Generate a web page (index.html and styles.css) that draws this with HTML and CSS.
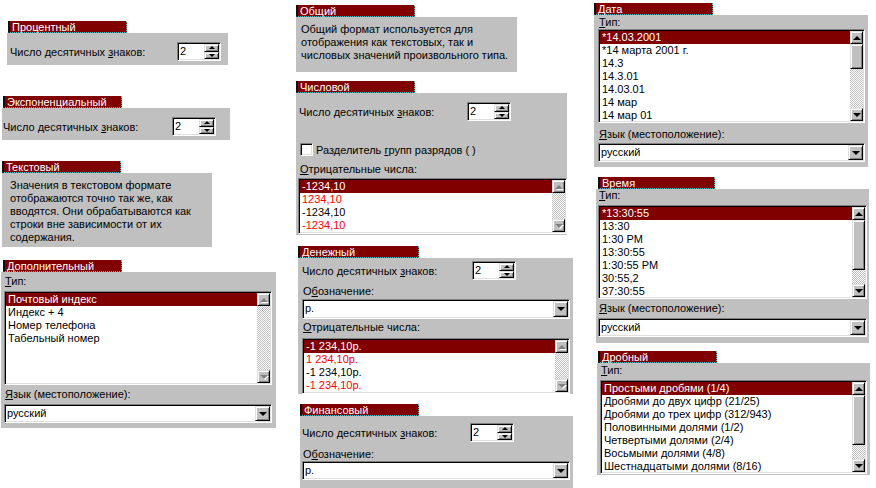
FILE: index.html
```html
<!DOCTYPE html>
<html lang="ru">

<head>
    <meta charset="UTF-8">
    <title>Форматы ячеек</title>
    <link rel="stylesheet" href="styles.css">
</head>

<body>
    <div class="sheet">
        <!-- левая колонка -->
        <div class="col col-1">
            <section class="panel percent">
                <div class="caption">Процентный</div>
                <div class="body">
                    <div class="spin-row">
                        <span>Число десятичных <u>з</u>наков:</span>
                        <div class="spin sunk"><span class="val">2</span>
                            <div class="spin-btns"><i class="btn"><b class="up"></b></i><i class="btn"><b class="down"></b></i></div>
                        </div>
                    </div>
                </div>
            </section>

            <section class="panel expo">
                <div class="caption">Экспоненциальный</div>
                <div class="body">
                    <div class="spin-row">
                        <span>Число десятичных <u>з</u>наков:</span>
                        <div class="spin sunk"><span class="val">2</span>
                            <div class="spin-btns"><i class="btn"><b class="up"></b></i><i class="btn"><b class="down"></b></i></div>
                        </div>
                    </div>
                </div>
            </section>

            <section class="panel text">
                <div class="caption">Текстовый</div>
                <div class="body">
                    <p class="note">Значения в текстовом формате<br>отображаются точно так же, как<br>вводятся. Они обрабатываются как<br>строки вне зависимости от их<br>содержания.</p>
                </div>
            </section>

            <section class="panel extra">
                <div class="caption">Дополнительный</div>
                <div class="body">
                    <div class="lbl"><u>Т</u>ип:</div>
                    <div class="list sunk tall">
                        <div class="items">
                            <div class="item sel">Почтовый индекс</div>
                            <div class="item">Индекс + 4</div>
                            <div class="item">Номер телефона</div>
                            <div class="item">Табельный номер</div>
                        </div>
                        <div class="sb off"><i class="btn"><b class="up"></b></i><span class="track"></span><i class="btn"><b class="down"></b></i></div>
                    </div>
                    <div class="lbl lang"><u>Я</u>зык (местоположение):</div>
                    <div class="combo sunk"><span class="val">русский</span><i class="btn"><b class="down"></b></i></div>
                </div>
            </section>
        </div>

        <!-- средняя колонка -->
        <div class="col col-2">
            <section class="panel general">
                <div class="caption">Общий</div>
                <div class="body">
                    <p class="note">Общий формат используется для<br>отображения как текстовых, так и<br>числовых значений произвольного типа.</p>
                </div>
            </section>

            <section class="panel number">
                <div class="caption">Числовой</div>
                <div class="body">
                    <div class="spin-row">
                        <span>Число десятичных <u>з</u>наков:</span>
                        <div class="spin sunk"><span class="val">2</span>
                            <div class="spin-btns"><i class="btn"><b class="up"></b></i><i class="btn"><b class="down"></b></i></div>
                        </div>
                    </div>
                    <div class="check-row"><span class="check sunk"></span><span>Разделитель <u>г</u>рупп разрядов ( )</span></div>
                    <div class="lbl neg-lbl"><u>О</u>трицательные числа:</div>
                    <div class="list sunk short">
                        <div class="items">
                            <div class="item sel">-1234,10</div>
                            <div class="item red">1234,10</div>
                            <div class="item">-1234,10</div>
                            <div class="item red">-1234,10</div>
                        </div>
                        <div class="sb off"><i class="btn"><b class="up"></b></i><span class="track"></span><i class="btn"><b class="down"></b></i></div>
                    </div>
                </div>
            </section>

            <section class="panel money">
                <div class="caption">Денежный</div>
                <div class="body">
                    <div class="spin-row">
                        <span>Число десятичных <u>з</u>наков:</span>
                        <div class="spin sunk"><span class="val">2</span>
                            <div class="spin-btns"><i class="btn"><b class="up"></b></i><i class="btn"><b class="down"></b></i></div>
                        </div>
                    </div>
                    <div class="lbl sym">О<u>б</u>означение:</div>
                    <div class="combo sunk"><span class="val">р.</span><i class="btn"><b class="down"></b></i></div>
                    <div class="lbl neg-lbl"><u>О</u>трицательные числа:</div>
                    <div class="list sunk short">
                        <div class="items">
                            <div class="item sel">-1 234,10р.</div>
                            <div class="item red">1 234,10р.</div>
                            <div class="item">-1 234,10р.</div>
                            <div class="item red">-1 234,10р.</div>
                        </div>
                        <div class="sb off"><i class="btn"><b class="up"></b></i><span class="track"></span><i class="btn"><b class="down"></b></i></div>
                    </div>
                </div>
            </section>

            <section class="panel fin">
                <div class="caption">Финансовый</div>
                <div class="body">
                    <div class="spin-row">
                        <span>Число десятичных <u>з</u>наков:</span>
                        <div class="spin sunk"><span class="val">2</span>
                            <div class="spin-btns"><i class="btn"><b class="up"></b></i><i class="btn"><b class="down"></b></i></div>
                        </div>
                    </div>
                    <div class="lbl sym">О<u>б</u>означение:</div>
                    <div class="combo sunk"><span class="val">р.</span><i class="btn"><b class="down"></b></i></div>
                </div>
            </section>
        </div>

        <!-- правая колонка -->
        <div class="col col-3">
            <section class="panel date">
                <div class="caption">Дата</div>
                <div class="body">
                    <div class="lbl"><u>Т</u>ип:</div>
                    <div class="list sunk tall">
                        <div class="items">
                            <div class="item sel">*14.03.2001</div>
                            <div class="item">*14 марта 2001 г.</div>
                            <div class="item">14.3</div>
                            <div class="item">14.3.01</div>
                            <div class="item">14.03.01</div>
                            <div class="item">14 мар</div>
                            <div class="item">14 мар 01</div>
                        </div>
                        <div class="sb"><i class="btn"><b class="up"></b></i><i class="thumb small"></i><span class="track"></span><i class="btn"><b class="down"></b></i></div>
                    </div>
                    <div class="lbl lang"><u>Я</u>зык (местоположение):</div>
                    <div class="combo sunk"><span class="val">русский</span><i class="btn"><b class="down"></b></i></div>
                </div>
            </section>

            <section class="panel time">
                <div class="caption">Время</div>
                <div class="body">
                    <div class="lbl"><u>Т</u>ип:</div>
                    <div class="list sunk tall">
                        <div class="items">
                            <div class="item sel">*13:30:55</div>
                            <div class="item">13:30</div>
                            <div class="item">1:30 PM</div>
                            <div class="item">13:30:55</div>
                            <div class="item">1:30:55 PM</div>
                            <div class="item">30:55,2</div>
                            <div class="item">37:30:55</div>
                        </div>
                        <div class="sb"><i class="btn"><b class="up"></b></i><i class="thumb big"></i><span class="track"></span><i class="btn"><b class="down"></b></i></div>
                    </div>
                    <div class="lbl lang"><u>Я</u>зык (местоположение):</div>
                    <div class="combo sunk"><span class="val">русский</span><i class="btn"><b class="down"></b></i></div>
                </div>
            </section>

            <section class="panel frac">
                <div class="caption">Дробный</div>
                <div class="body">
                    <div class="lbl"><u>Т</u>ип:</div>
                    <div class="list sunk tall">
                        <div class="items">
                            <div class="item sel">Простыми дробями (1/4)</div>
                            <div class="item">Дробями до двух цифр (21/25)</div>
                            <div class="item">Дробями до трех цифр (312/943)</div>
                            <div class="item">Половинными долями (1/2)</div>
                            <div class="item">Четвертыми долями (2/4)</div>
                            <div class="item">Восьмыми долями (4/8)</div>
                            <div class="item">Шестнадцатыми долями (8/16)</div>
                        </div>
                        <div class="sb"><i class="btn"><b class="up"></b></i><i class="thumb big"></i><span class="track"></span><i class="btn"><b class="down"></b></i></div>
                    </div>
                </div>
            </section>
        </div>
    </div>
</body>

</html>
```

FILE: styles.css
```css
body {
    margin: 0;
    background-color: white;
    color: black;
    font: 11px "Liberation Sans", Arial, sans-serif;
}

.sheet {
    display: flex;
    width: 876px;
    height: 488px;
    overflow: hidden;
}

.col {
    display: flex;
    flex-direction: column;
    align-items: flex-start;
}

.col-1 {
    width: 290px;
}

.col-2 {
    width: 295px;
}

.col-3 {
    width: 291px;
}

/* заголовок раздела */
.caption {
    box-sizing: border-box;
    width: 119px;
    height: 12px;
    padding-left: 2px;
    line-height: 12px;
    background-color: #800000;
    color: white;
    border-left: 2px solid #101010;
    border-right: 1px dotted #48b8c0;
    border-bottom: 1px dotted #48b8c0;
    white-space: nowrap;
}

.body {
    box-sizing: border-box;
    background-color: #c0c0c0;
    display: flex;
    flex-direction: column;
    align-items: flex-start;
}

.note {
    margin: 0;
    line-height: 13px;
}

.lbl {
    line-height: 13px;
    height: 13px;
    padding-left: 1px;
    white-space: nowrap;
}

/* рамки в стиле windows */
.sunk {
    box-sizing: border-box;
    padding: 1px;
    background-color: white;
    border: 1px solid;
    border-color: #808080 white white #808080;
    box-shadow: inset 1px 1px #000, inset -1px -1px #dfdfdf;
}

.btn {
    box-sizing: border-box;
    display: flex;
    align-items: center;
    justify-content: center;
    background-color: #c0c0c0;
    border: 1px solid;
    border-color: #dfdfdf #000 #000 #dfdfdf;
    box-shadow: inset 1px 1px white, inset -1px -1px #808080;
}

.up,
.down {
    width: 0;
    height: 0;
    border-left: 3px solid transparent;
    border-right: 3px solid transparent;
}

.up {
    border-bottom: 3px solid #000;
}

.down {
    border-top: 3px solid #000;
}

.sb .up,
.sb .down,
.combo .down {
    border-left-width: 4px;
    border-right-width: 4px;
}

.sb .up {
    border-bottom-width: 4px;
}

.sb .down,
.combo .down {
    border-top-width: 4px;
}

.off .up {
    border-bottom-color: #808080;
    filter: drop-shadow(1px 1px 0 white);
}

.off .down {
    border-top-color: #808080;
    filter: drop-shadow(1px 1px 0 white);
}

/* счётчик */
.spin-row {
    display: grid;
    align-items: center;
    white-space: nowrap;
}

.spin {
    display: flex;
    width: 44px;
    height: 19px;
}

.spin .val,
.combo .val {
    flex: 1;
    padding-left: 1px;
    line-height: 15px;
}

.spin-btns {
    display: flex;
    flex-direction: column;
    width: 15px;
}

.spin-btns .btn {
    flex: 1;
}

/* выпадающий список */
.combo {
    display: flex;
    height: 19px;
}

.combo .btn {
    width: 15px;
}

.check-row {
    display: flex;
    align-items: center;
    height: 13px;
    margin: 22px 0 0 1px;
    white-space: nowrap;
}

.check {
    width: 13px;
    height: 13px;
    margin-right: 3px;
}

/* списки */
.list {
    display: flex;
}

.tall {
    height: 94px;
}

.short {
    height: 56px;
}

.items {
    flex: 1;
    overflow: hidden;
}

.item {
    height: 13px;
    line-height: 13px;
    padding-left: 2px;
    white-space: nowrap;
}

.sel {
    background-color: #800000;
    color: white;
}

.red {
    color: #ff0000;
}

.sb {
    display: flex;
    flex-direction: column;
    width: 13px;
}

.sb .btn {
    height: 13px;
}

.track {
    flex: 1;
    background: repeating-conic-gradient(#c0c0c0 0 25%, white 0 50%) 0 0 / 2px 2px;
}

.thumb {
    box-sizing: border-box;
    background-color: #c0c0c0;
    border: 1px solid;
    border-color: #dfdfdf #000 #000 #dfdfdf;
    box-shadow: inset 1px 1px white, inset -1px -1px #808080;
}

.small {
    height: 25px;
}

.big {
    height: 50px;
}

/* расположение разделов */
.percent {
    margin: 21px 0 0 7px;
}

.percent .caption {
    margin-left: 1px;
}

.percent .body {
    width: 221px;
    height: 32px;
    padding: 9px 0 0 3px;
}

.percent .spin-row {
    grid-template-columns: 167px 44px;
}

.expo {
    margin: 31px 0 0 2px;
}

.expo .caption {
    margin-left: 1px;
}

.expo .body {
    width: 228px;
    height: 32px;
    padding: 9px 0 0 1px;
}

.expo .spin-row {
    grid-template-columns: 169px 44px;
}

.text {
    margin: 21px 0 0 2px;
}

.text .body {
    width: 210px;
    height: 74px;
    padding: 6px 0 0 8px;
}

.extra {
    margin: 13px 0 0 1px;
}

.extra .caption {
    margin-left: 2px;
}

.extra .body {
    width: 275px;
    height: 156px;
    padding: 3px 3px 0;
}

.extra .list,
.extra .combo {
    width: 268px;
    margin-top: 3px;
}

.extra .lang {
    margin-top: 3px;
}

.general {
    margin: 5px 0 0 6px;
}

.general .body {
    width: 221px;
    height: 55px;
    padding: 6px 0 0 5px;
}

.number {
    margin: 9px 0 0 6px;
}

.number .body {
    width: 271px;
    height: 142px;
    padding: 9px 0 0 3px;
}

.number .spin-row {
    grid-template-columns: 168px 44px;
}

.number .neg-lbl {
    margin-top: 7px;
}

.number .list {
    width: 269px;
    margin: 2px 0 0 -1px;
}

.money {
    margin: 11px 0 0 8px;
}

.money .caption {
    width: 121px;
}

.money .body {
    width: 275px;
    height: 136px;
    padding: 3px 0 0 4px;
}

.money .spin-row {
    grid-template-columns: 170px 44px;
}

.money .sym {
    margin-top: 5px;
}

.money .combo {
    width: 268px;
    height: 20px;
    margin-top: 1px;
}

.money .neg-lbl {
    margin-top: 2px;
}

.money .list {
    width: 268px;
    margin-top: 4px;
}

.fin {
    margin: 10px 0 0 10px;
}

.fin .body {
    width: 273px;
    height: 72px;
    padding: 7px 0 0 2px;
}

.fin .spin-row {
    grid-template-columns: 168px 44px;
}

.fin .sym {
    margin-top: 6px;
}

.fin .combo {
    width: 268px;
}

.date {
    margin: 3px 0 0 9px;
}

.date .body {
    width: 274px;
    height: 152px;
    padding: 1px 0 0 4px;
}

.date .list,
.date .combo {
    width: 267px;
}

.date .lang {
    margin-top: 5px;
}

.date .combo {
    margin-top: 2px;
}

.time {
    margin: 10px 0 0 11px;
}

.time .caption {
    margin-left: 2px;
    width: 117px;
}

.time .body {
    width: 273px;
    height: 154px;
    padding: 0 0 0 2px;
}

.time .list {
    width: 269px;
    margin-top: 3px;
}

.time .lang,
.time .combo {
    margin-top: 3px;
}

.time .combo {
    width: 269px;
}

.frac {
    margin: 8px 0 0 12px;
}

.frac .caption {
    margin-left: 1px;
}

.frac .body {
    width: 273px;
    height: 112px;
    padding: 1px 0 0 3px;
}

.frac .list {
    width: 267px;
    margin-top: 3px;
}
```
